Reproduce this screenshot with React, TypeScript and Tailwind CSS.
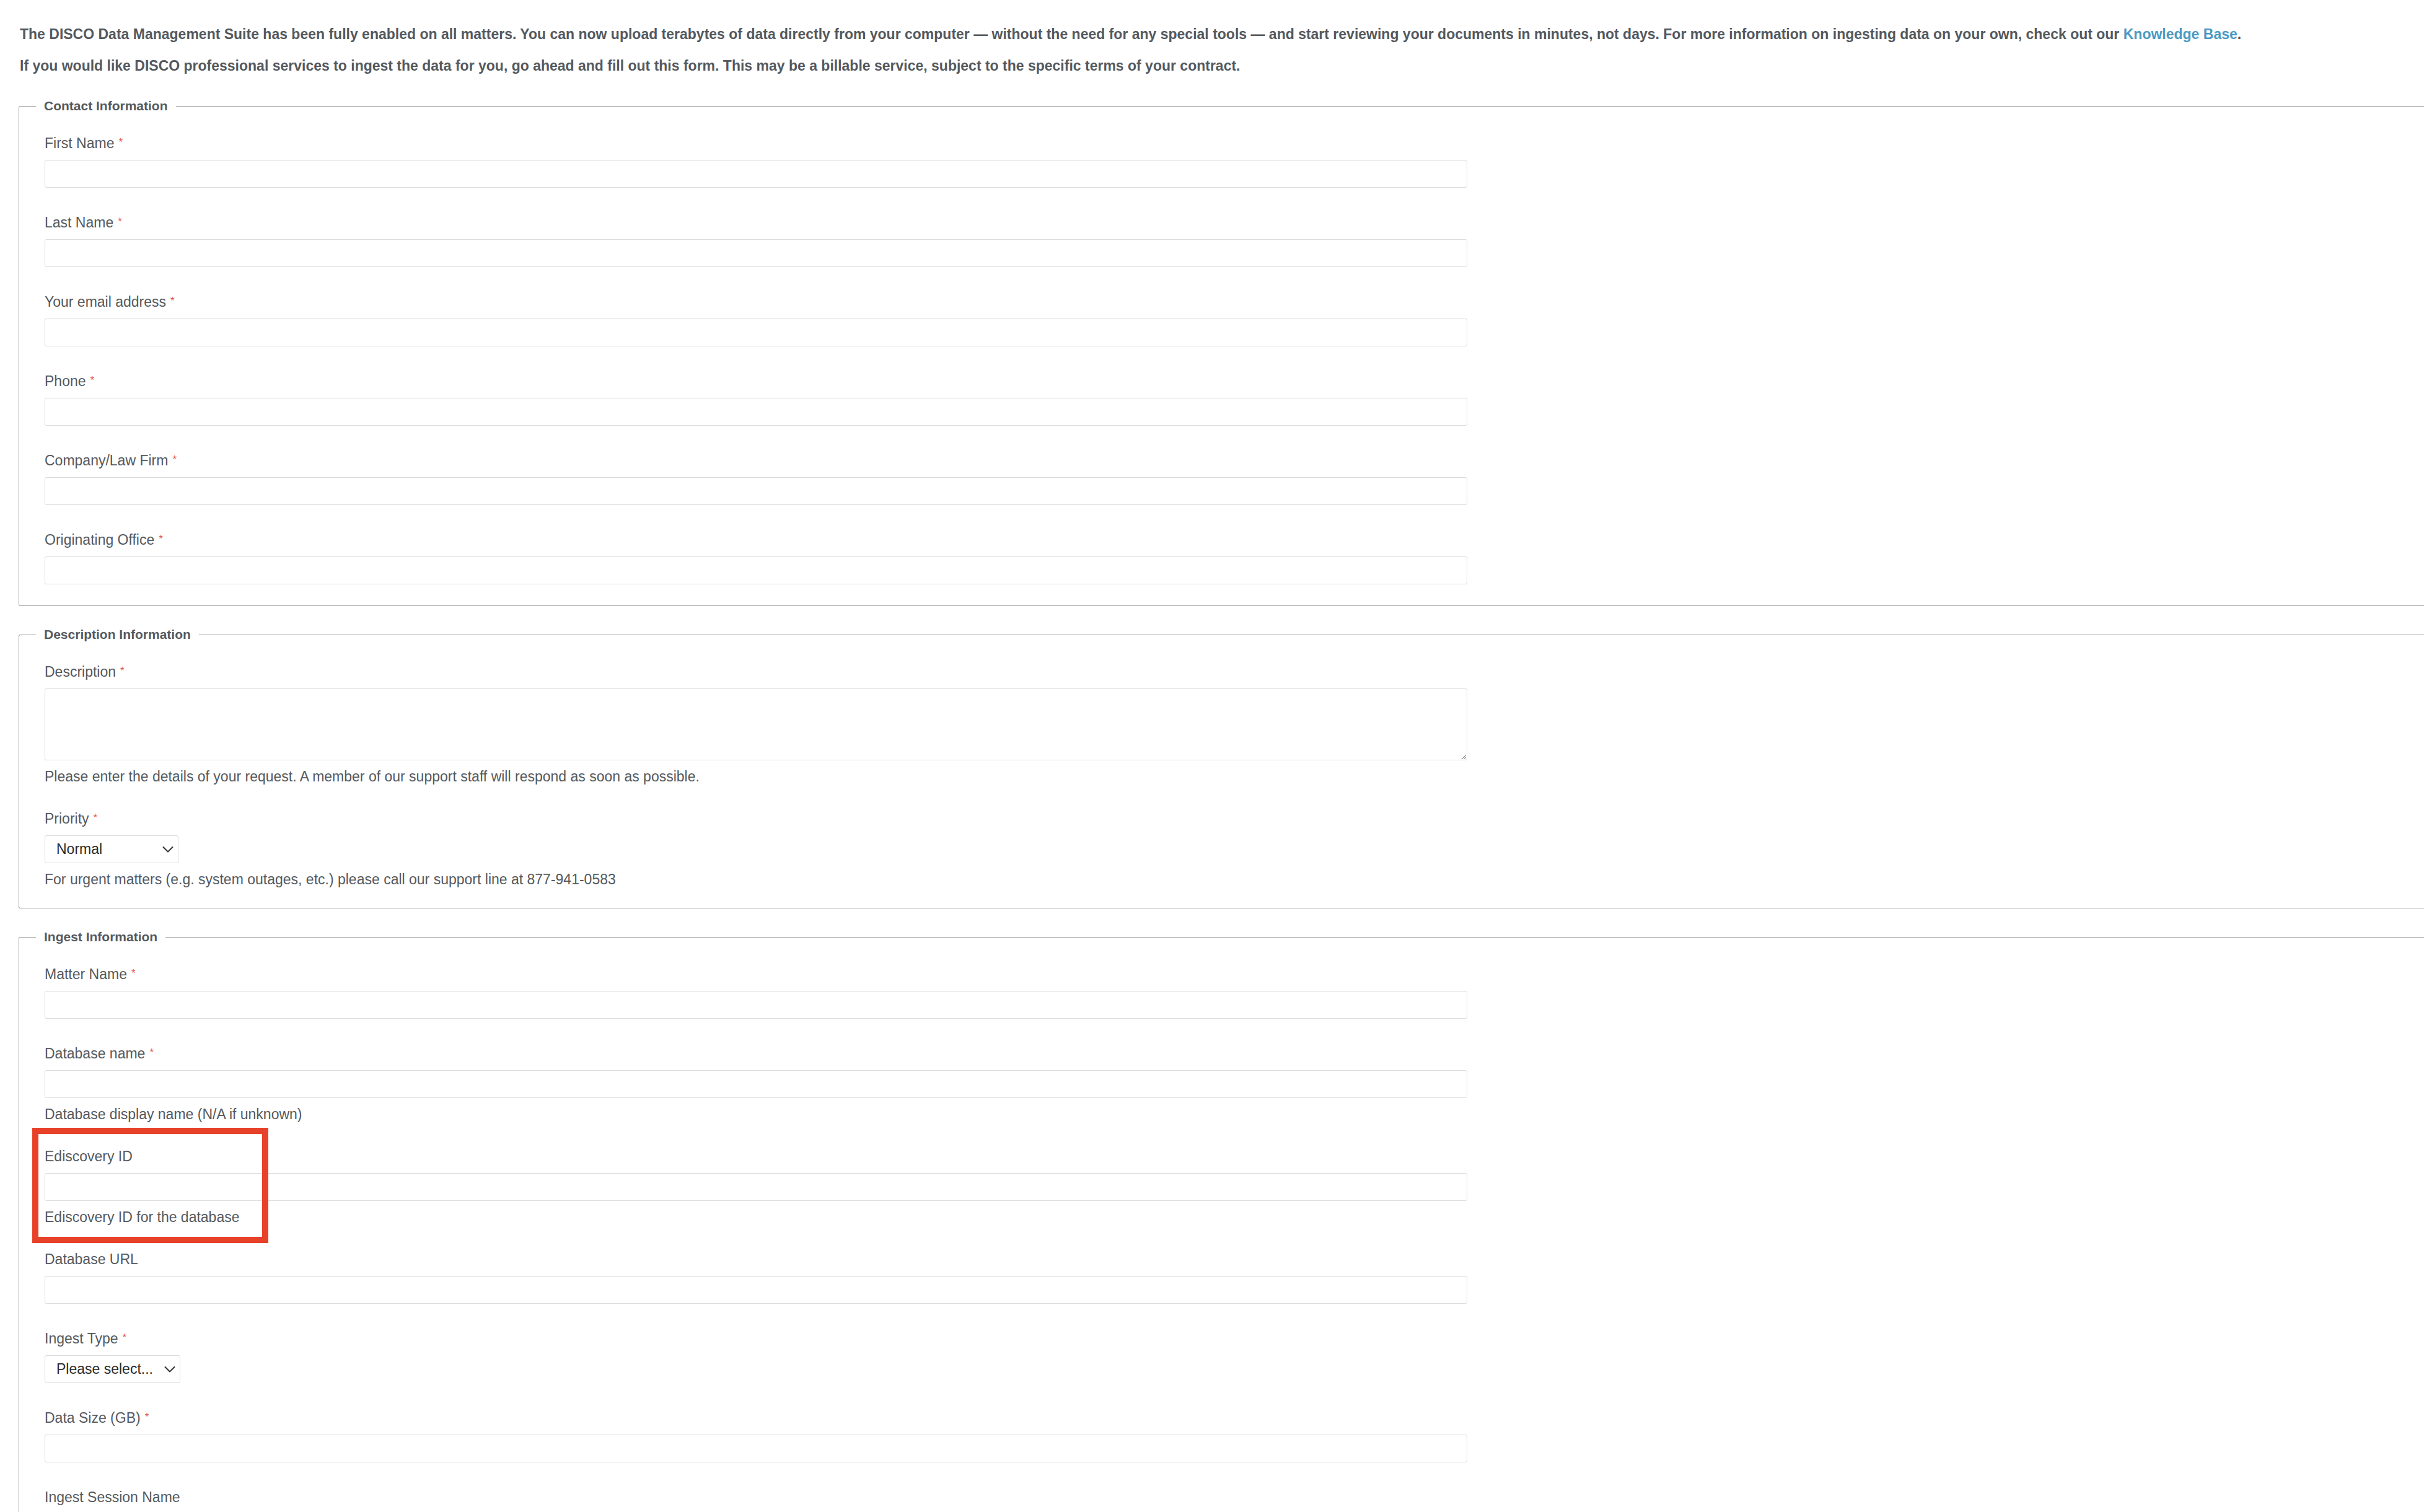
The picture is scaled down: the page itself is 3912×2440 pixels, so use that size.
import React from 'react';

type FieldProps = {
    label: string;
    required?: boolean;
    help?: string;
    children?: React.ReactNode;
};

function Field({ label, required, help, children }: FieldProps) {
    return (
        <div>
            <label className="block mb-[10px] text-[23px] leading-[33px] text-[#55595d]">
                {label}
                {required && <span className="relative -top-[4px] ml-[7px] text-[17px] leading-none text-[#e5534b]">*</span>}
            </label>
            {children ?? <input type="text" className="block h-[45px] w-[2296px] rounded-[3px] border border-[#dcdcdc] bg-white" />}
            {help && <p className="mt-[14px] text-[23px] leading-[24px] text-[#55595d]">{help}</p>}
        </div>
    );
}

function Select({ value, width }: { value: string; width: string }) {
    return (
        <div className={`relative ${width}`}>
            <select
                defaultValue={value}
                className="block h-[45px] w-full appearance-none rounded-[3px] border border-[#dcdcdc] bg-white pl-[18px] text-[23px] text-[#2b2b2b] outline-none"
            >
                <option>{value}</option>
            </select>
            <svg
                className="pointer-events-none absolute right-[8px] top-1/2 -translate-y-1/2"
                width="18"
                height="11"
                viewBox="0 0 18 11"
                fill="none"
            >
                <polyline points="1.5,1.5 9,9 16.5,1.5" stroke="#333" strokeWidth="2" strokeLinecap="round" strokeLinejoin="round" />
            </svg>
        </div>
    );
}

function Section({ title, children }: { title: string; children: React.ReactNode }) {
    return (
        <fieldset className="mb-[31px] rounded-l-[3px] border border-r-0 border-[#a2a2a2] pl-[27px] pb-[34px]">
            <legend className="px-[13px] text-[21px] font-bold leading-[30px] text-[#54595e]">{title}</legend>
            <div className="flex flex-col gap-[40px] pl-[14px] pt-[29px]">{children}</div>
        </fieldset>
    );
}

export default function App() {
    return (
        <div className="relative h-[2440px] overflow-hidden bg-white pl-[30px] font-['Liberation_Sans',Arial,sans-serif] text-[#54595e]">
            <p className="pl-[2px] pt-[39px] text-[23px] font-bold leading-[33px]">
                The DISCO Data Management Suite has been fully enabled on all matters. You can now upload terabytes of data directly from your computer — without the need for any special tools — and start reviewing your documents in minutes, not days. For more information on ingesting data on your own, check out our{' '}
                <a className="text-[#4a9bc1]">Knowledge Base</a>.
            </p>
            <p className="mt-[18px] mb-[33px] pl-[2px] text-[23px] font-bold leading-[33px]">
                If you would like DISCO professional services to ingest the data for you, go ahead and fill out this form. This may be a billable service, subject to the specific terms of your contract.
            </p>

            <Section title="Contact Information">
                <Field label="First Name" required />
                <Field label="Last Name" required />
                <Field label="Your email address" required />
                <Field label="Phone" required />
                <Field label="Company/Law Firm" required />
                <Field label="Originating Office" required />
            </Section>

            <Section title="Description Information">
                <Field
                    label="Description"
                    required
                    help="Please enter the details of your request. A member of our support staff will respond as soon as possible."
                >
                    <textarea className="block h-[116px] w-[2296px] rounded-[3px] border border-[#dcdcdc] bg-white" />
                </Field>
                <Field
                    label="Priority"
                    required
                    help="For urgent matters (e.g. system outages, etc.) please call our support line at 877-941-0583"
                >
                    <Select value="Normal" width="w-[216px]" />
                </Field>
            </Section>

            <Section title="Ingest Information">
                <Field label="Matter Name" required />
                <Field label="Database name" required help="Database display name (N/A if unknown)" />
                <Field label="Ediscovery ID" help="Ediscovery ID for the database" />
                <Field label="Database URL" />
                <Field label="Ingest Type" required>
                    <Select value="Please select..." width="w-[219px]" />
                </Field>
                <Field label="Data Size (GB)" required />
                <Field label="Ingest Session Name" />
            </Section>

            {/* highlight annotation */}
            <div className="pointer-events-none absolute left-[52px] top-[1820px] h-[186px] w-[381px] border-[10px] border-[#e8412a]" />
        </div>
    );
}
